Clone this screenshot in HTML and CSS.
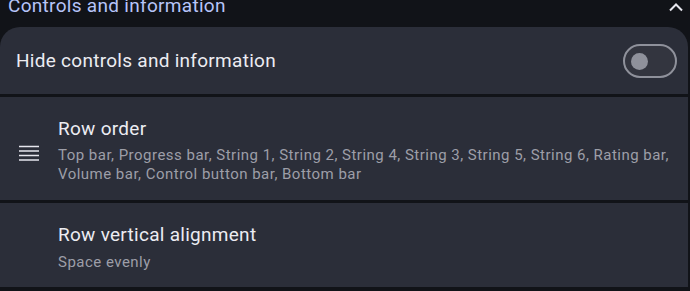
FILE: index.html
```html
<!DOCTYPE html>
<html>
<head>
<meta charset="utf-8">
<link rel="stylesheet" href="styles.css">
</head>
<body>
<div class="page">
  <div class="header">
    <span class="header-title">Controls and information</span>
    <svg class="chevron" width="16" height="10" viewBox="0 0 16 10"><path d="M2 8.5 L8 2.5 L14 8.5" fill="none" stroke="#e6e6ee" stroke-width="2"/></svg>
  </div>
  <div class="card card-top">
    <span class="title">Hide controls and information</span>
    <div class="switch"><div class="thumb"></div></div>
  </div>
  <div class="card card-row">
    <div class="icon">
      <svg width="20" height="16" viewBox="0 0 20 16"><path d="M0 1.5H20M0 6H20M0 10.5H20M0 15H20" stroke="#e6e6ee" stroke-width="1.6"/></svg>
    </div>
    <div class="text">
      <div class="title">Row order</div>
      <div class="sub">Top bar, Progress bar, String 1, String 2, String 4, String 3, String 5, String 6, Rating bar, Volume bar, Control button bar, Bottom bar</div>
    </div>
  </div>
  <div class="card card-row card-last">
    <div class="icon"></div>
    <div class="text">
      <div class="title">Row vertical alignment</div>
      <div class="sub">Space evenly</div>
    </div>
  </div>
</div>
</body>
</html>
```
FILE: styles.css
```css
html, body {
  margin: 0;
  padding: 0;
  background: #111318;
  font-family: Roboto, "Noto Sans", sans-serif;
  overflow: hidden;
}
.page {
  width: 690px;
  height: 291px;
  display: flex;
  flex-direction: column;
}
.header {
  height: 27px;
  display: flex;
  align-items: flex-start;
  justify-content: space-between;
  padding: 0 6px 0 8px;
  box-sizing: border-box;
}
.header-title {
  color: #b6c4f8;
  font-size: 19px;
  line-height: 20px;
  letter-spacing: 0.3px;
  margin-top: -4px;
}
.chevron {
  margin-top: 2px;
}
.card {
  background: #2b2e39;
  width: 688px;
  box-sizing: border-box;
}
.card-top {
  height: 67px;
  border-radius: 20px 20px 0 0;
  display: flex;
  align-items: center;
  justify-content: space-between;
  padding: 0 11px 0 16px;
  margin-bottom: 3px;
}
.title {
  color: #ececf2;
  font-size: 19px;
  line-height: 24px;
  letter-spacing: 0.28px;
}
.switch {
  width: 54px;
  height: 34px;
  border: 2px solid #8f919b;
  border-radius: 18px;
  background: #33353f;
  display: flex;
  align-items: center;
  padding-left: 6px;
  box-sizing: border-box;
  margin-top: 1px;
}
.thumb {
  width: 17px;
  height: 17px;
  border-radius: 50%;
  background: #8f919b;
}
.card-row {
  display: flex;
  align-items: center;
  padding: 20px 16px 16px 0;
  margin-bottom: 3px;
}
.card-last {
  padding-top: 20px;
  padding-bottom: 15px;
}
.icon {
  width: 58px;
  flex: none;
  display: flex;
  justify-content: center;
  margin-top: 4px;
}
.text {
  display: flex;
  flex-direction: column;
  gap: 5px;
}
.card-last .text {
  gap: 6px;
}
.sub {
  color: #9d9ea8;
  font-size: 15px;
  line-height: 19px;
  letter-spacing: 0.48px;
}
```
